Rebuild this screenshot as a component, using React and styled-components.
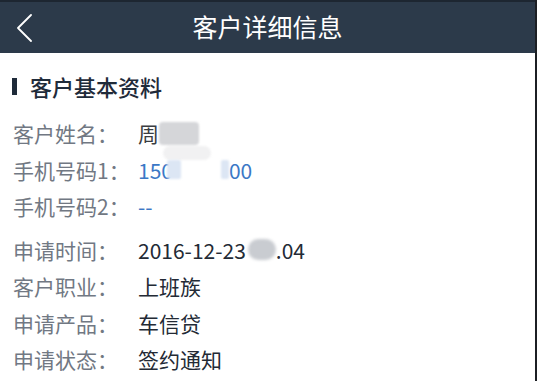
import styled, { createGlobalStyle } from "styled-components";

const GlobalStyle = createGlobalStyle`
  html, body {
    margin: 0;
    padding: 0;
    background: #ffffff;
  }
  body {
    font-family: "Noto Sans CJK SC", "Noto Sans", sans-serif;
  }
`;

const Page = styled.div`
  width: 100%;
  height: 100vh;
  box-sizing: border-box;
  border-right: 2px solid #1c1f24;
  background: #ffffff;
  overflow: hidden;
`;

const NavBar = styled.header`
  height: 53px;
  box-sizing: border-box;
  border-top: 2px solid #1d2631;
  background: #2c3a4a;
  display: grid;
  grid-template-columns: 1fr auto 1fr;
  align-items: center;
`;

const BackButton = styled.button`
  justify-self: start;
  margin-left: 15px;
  padding: 0;
  border: none;
  background: none;
  display: flex;
  align-items: center;
  cursor: pointer;
`;

const NavTitle = styled.h1`
  margin: 0 0 4px 0;
  font-size: 25px;
  font-weight: 400;
  color: #ffffff;
`;

const Section = styled.section`
  padding-top: 18px;
`;

const SectionTitle = styled.h2`
  margin: 0 0 14px 0;
  padding-left: 12px;
  display: flex;
  align-items: center;
  gap: 13px;
  height: 30px;
  font-size: 22px;
  font-weight: 500;
  color: #1f2b3a;

  &::before {
    content: "";
    width: 5px;
    height: 17px;
    background: #1f2b3a;
  }
`;

const Group = styled.div`
  display: flex;
  flex-direction: column;
  margin-bottom: ${(p) => p.$gap || 0}px;
`;

const Row = styled.div`
  height: 36.5px;
  display: flex;
  align-items: center;
  padding-left: 13px;
  font-size: 21px;
`;

const Label = styled.span`
  width: 125px;
  color: #717883;
  white-space: nowrap;
`;

const Value = styled.span`
  display: flex;
  align-items: center;
  white-space: nowrap;
  color: ${(p) => (p.$link ? "#3b78c6" : "#232a35")};
`;

// blurred patch that hides part of a value
const Smudge = styled.span`
  position: relative;
  display: inline-block;
  width: ${(p) => p.$w}px;
  height: ${(p) => p.$h}px;
  margin-left: ${(p) => p.$ml || 0}px;
  background: ${(p) => p.$color};
  border-radius: ${(p) => p.$r || 3}px;
  filter: blur(${(p) => p.$blur || 1}px);
`;

const NameSmudge = styled(Smudge)`
  &::after {
    content: "";
    position: absolute;
    left: 4px;
    top: 24px;
    width: 48px;
    height: 14px;
    border-radius: 8px;
    background: #f1f1f2;
  }
`;

const Blank = styled.span`
  display: inline-block;
  width: ${(p) => p.$w}px;
`;

const ChevronLeft = () => (
  <svg width="18" height="28" viewBox="0 0 18 28" fill="none">
    <path d="M16 1 L3 14 L16 27" stroke="#ffffff" strokeWidth="1.8" strokeLinecap="round" strokeLinejoin="round" />
  </svg>
);

const basicInfo = [
  { label: "客户姓名：", key: "name" },
  { label: "手机号码1：", key: "phone1" },
  { label: "手机号码2：", key: "phone2" },
];

const applyInfo = [
  { label: "申请时间：", key: "time" },
  { label: "客户职业：", value: "上班族" },
  { label: "申请产品：", value: "车信贷" },
  { label: "申请状态：", value: "签约通知" },
];

const renderValue = (item) => {
  switch (item.key) {
    case "name":
      return (
        <Value style={{ color: "#3a3d42" }}>
          周<NameSmudge $w={40} $h={23} $color="#d5d6d9" $r={4} $blur={1.2} />
        </Value>
      );
    case "phone1":
      return (
        <Value $link>
          150
          <Smudge $w={14} $h={19} $ml={-6} $color="#dce6f4" $r={2} $blur={0.8} />
          <Blank $w={40} />
          <Smudge $w={8} $h={19} $color="#dce6f4" $r={2} $blur={0.8} />
          00
        </Value>
      );
    case "phone2":
      return <Value $link>--</Value>;
    case "time":
      return (
        <Value>
          2016-12-23
          <Smudge $w={28} $h={21} $ml={2} $color="#c9ccd1" $r={11} $blur={1.5} />
          .04
        </Value>
      );
    default:
      return <Value>{item.value}</Value>;
  }
};

export default function App() {
  return (
    <>
      <GlobalStyle />
      <Page>
        <NavBar>
          <BackButton aria-label="返回">
            <ChevronLeft />
          </BackButton>
          <NavTitle>客户详细信息</NavTitle>
          <span />
        </NavBar>
        <Section>
          <SectionTitle>客户基本资料</SectionTitle>
          <Group $gap={7}>
            {basicInfo.map((item) => (
              <Row key={item.label}>
                <Label>{item.label}</Label>
                {renderValue(item)}
              </Row>
            ))}
          </Group>
          <Group>
            {applyInfo.map((item) => (
              <Row key={item.label}>
                <Label>{item.label}</Label>
                {renderValue(item)}
              </Row>
            ))}
          </Group>
        </Section>
      </Page>
    </>
  );
}
